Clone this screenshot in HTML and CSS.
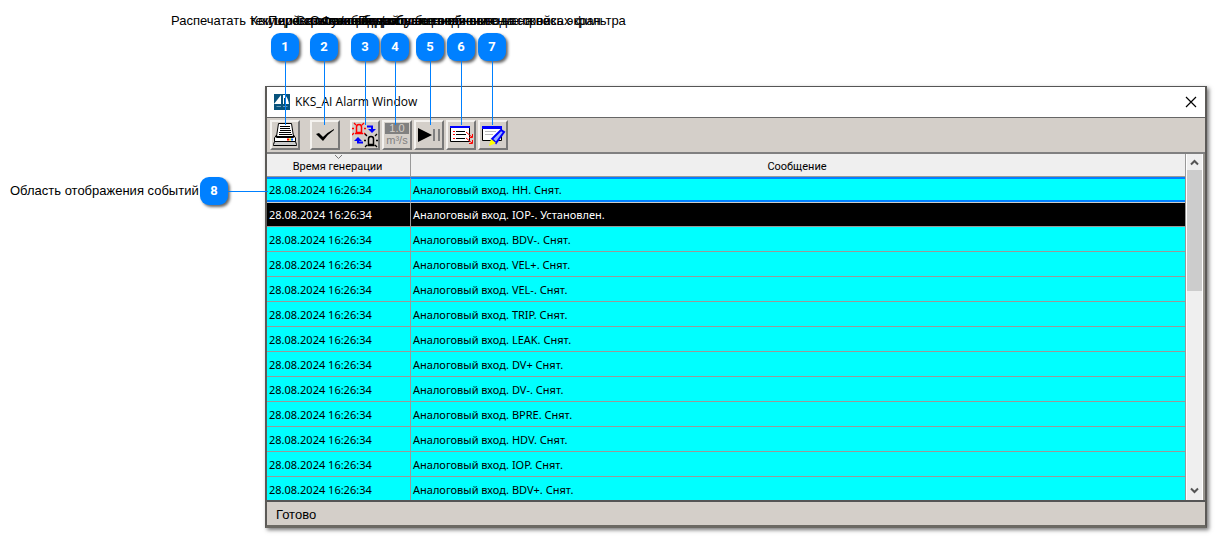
FILE: index.html
```html
<!DOCTYPE html>
<html lang="ru">
<head>
<meta charset="utf-8">
<title>KKS_AI Alarm Window</title>
<link rel="stylesheet" href="styles.css">
</head>
<body>
<main class="figure">
  <section class="window">
    <header class="titlebar">
      <svg class="logo" width="16" height="16" viewBox="0 0 16 16" aria-hidden="true"><rect width="16" height="16" fill="#07527c"/><path d="M0 10 7 1v9zM9 1h2q3 3 4 9h-4V4h-1v6H9z" fill="#fff"/><path d="M2 12h5v1H3zM9 12h5l-1 1H9z" fill="#6c9db8"/></svg>
      <h1 class="title">KKS_AI Alarm Window</h1>
      <button class="close" aria-label="Закрыть"><svg width="12" height="12" viewBox="0 0 12 12"><path d="m1 1 10 10M11 1 1 11" stroke="#000" stroke-width="1.200"/></svg></button>
    </header>
    <div class="toolbar">
      <button class="tool tool-spaced" aria-label="Печать"><svg width="26" height="26" viewBox="0 0 26 26"><path d="M6.500 1.500h13l2 13h-17z" fill="#fff" stroke="#000"/><path d="M8 4.500h10M8 6.500h10M8 8.500h11M7 10.500h12M7 12.500h13" stroke="#000"/><path d="M4.500 13 2.500 16v3.500h21V16l-2-3v2.500h-17z" fill="#fff" stroke="#000"/><path d="M2.500 19.500h21l1 3v1h-23v-1z" fill="#ccc" stroke="#000"/><path d="M15 17.500h2" stroke="#f00" stroke-width="2"/><path d="M17 17.500h2" stroke="#fd0" stroke-width="2"/><path d="M19 17.500h2" stroke="#06f" stroke-width="2"/></svg></button>
      <button class="tool tool-spaced" aria-label="Квитировать"><svg width="26" height="26" viewBox="0 0 26 26"><path d="m4 12 3-1 4 4q5-5 11-8v1q-6 4-11 11z" fill="#000"/></svg></button>
      <button class="tool" aria-label="Переключить"><svg width="26" height="26" viewBox="0 0 26 26" fill="none"><path d="M4.500 10.500V5q0-2.500 2.500-2.500T9.500 5v5.500z" stroke="#f00" stroke-width="1.500"/><path d="M3 11.500h8M2 1l2 2M12 1l-2 2M0 6.500h2M12 6.500h2M0 13l2-2M12 11l2 2" stroke="#f00" stroke-width="1.300"/><path d="M16.500 22.500V17q0-2.500 2.500-2.500t2.500 2.500v5.500z" stroke="#000" stroke-width="1.500"/><path d="M15.500 23.500h7M13 12l2 2M25 12l-2 2M12 18.500h2M24 18.500h2M13 25l2-2M25 25l-2-2" stroke="#000" stroke-width="1.300"/><path d="M15 4.500h5V8M11 20.500H6V18" stroke="#00f" stroke-width="2"/><path d="m16 7 4 4 4-4zM2 19l4-4 4 4z" fill="#00f"/></svg></button>
      <button class="tool tool-units" aria-label="Единицы измерения"><span class="value">1.0</span><span class="unit">m³/s</span></button>
      <button class="tool" aria-label="Пауза"><svg width="26" height="26" viewBox="0 0 26 26"><path d="m2 6 14 7-14 7z" fill="#000"/><path d="M17 7h2v12h-2zM22 7h2v12h-2z" fill="#808080"/></svg></button>
      <button class="tool" aria-label="Список"><svg width="26" height="26" viewBox="0 0 26 26" fill="none"><path d="M2.500 5v14.500h19V5" fill="#fff" stroke="#000"/><path d="M2 4h20v2H2z" fill="#00f"/><path d="M5 9.500h2M5 12.500h2M5 16.500h2" stroke="#f00"/><path d="M8 9.500h9M8 12.500h10M8 16.500h9" stroke="#000"/><path d="m18 10 6 5M18 16l6 5M21 15.500h3.500V12M21 21.500h3.500V18" stroke="#f00"/></svg></button>
      <button class="tool" aria-label="Фильтр"><svg width="26" height="26" viewBox="0 0 26 26"><path d="M2.500 5v13.500h19V5" fill="#fff" stroke="#000"/><path d="M2 4h20v3H2z" fill="#00f"/><path d="M5 9.500h11M5 12.500h8" stroke="#bbb"/><path d="m12 17 9-9 3 2-8 11z" fill="#9db0ff" stroke="#00f" stroke-width="2"/><path d="m11 17 5 4-7 3z" fill="#ff0"/></svg></button>
    </div>
    <div class="content">
      <div class="list">
        <table class="events">
          <colgroup><col class="col-time"><col></colgroup>
          <thead><tr><th><svg class="sort" width="9" height="5" viewBox="0 0 9 5" aria-hidden="true"><path d="M1 0 4.500 3.500 8 0" fill="none" stroke="#777"/></svg>Время генерации</th><th>Сообщение</th></tr></thead>
          <tbody>
            <tr class="current"><td>28.08.2024 16:26:34</td><td>Аналоговый вход. HH. Снят.</td></tr>
            <tr class="selected"><td>28.08.2024 16:26:34</td><td>Аналоговый вход. IOP-. Установлен.</td></tr>
            <tr><td>28.08.2024 16:26:34</td><td>Аналоговый вход. BDV-. Снят.</td></tr>
            <tr><td>28.08.2024 16:26:34</td><td>Аналоговый вход. VEL+. Снят.</td></tr>
            <tr><td>28.08.2024 16:26:34</td><td>Аналоговый вход. VEL-. Снят.</td></tr>
            <tr><td>28.08.2024 16:26:34</td><td>Аналоговый вход. TRIP. Снят.</td></tr>
            <tr><td>28.08.2024 16:26:34</td><td>Аналоговый вход. LEAK. Снят.</td></tr>
            <tr><td>28.08.2024 16:26:34</td><td>Аналоговый вход. DV+ Снят.</td></tr>
            <tr><td>28.08.2024 16:26:34</td><td>Аналоговый вход. DV-. Снят.</td></tr>
            <tr><td>28.08.2024 16:26:34</td><td>Аналоговый вход. BPRE. Снят.</td></tr>
            <tr><td>28.08.2024 16:26:34</td><td>Аналоговый вход. HDV. Снят.</td></tr>
            <tr><td>28.08.2024 16:26:34</td><td>Аналоговый вход. IOP. Снят.</td></tr>
            <tr><td>28.08.2024 16:26:34</td><td>Аналоговый вход. BDV+. Снят.</td></tr>
          </tbody>
        </table>
      </div>
      <div class="scrollbar">
        <button class="arrow" aria-label="Вверх"><svg width="9" height="7" viewBox="0 0 9 7"><path d="m1 5.500 3.500-3.500L8 5.500" fill="none" stroke="#555" stroke-width="2"/></svg></button>
        <div class="thumb"></div>
        <button class="arrow arrow-down" aria-label="Вниз"><svg width="9" height="7" viewBox="0 0 9 7"><path d="m1 1.500 3.500 3.500L8 1.500" fill="none" stroke="#555" stroke-width="2"/></svg></button>
      </div>
    </div>
    <footer class="status">Готово</footer>
  </section>

  <div class="callout c1"><span class="label">Распечатать текущий список событий</span><span class="pill">1</span></div>
  <div class="callout c2"><span class="label">Квитировать сообщения</span><span class="pill">2</span></div>
  <div class="callout c3"><span class="label">Переключение вида сообщений</span><span class="pill">3</span></div>
  <div class="callout c4"><span class="label">Скрыть/отобразить все значения</span><span class="pill">4</span></div>
  <div class="callout c5"><span class="label">Остановить/запустить обновление окна</span><span class="pill">5</span></div>
  <div class="callout c6"><span class="label">Функция отображения и вывода на весь экран</span><span class="pill">6</span></div>
  <div class="callout c7"><span class="label">Подробные сведения о настройках фильтра</span><span class="pill">7</span></div>
  <div class="callout-side"><span class="label">Область отображения событий</span><span class="pill">8</span></div>
</main>
</body>
</html>
```
FILE: styles.css
```css
* { box-sizing: border-box; }
body { margin: 0; background: #fff; color: #000; font-family: "Liberation Sans", Arial, sans-serif; }
button { padding: 0; border: 0; background: none; font: inherit; }
svg { display: block; }

.figure { position: relative; padding: 86px 9px 9px 265px; overflow: hidden; }
.window {
  display: flex;
  flex-direction: column;
  border: 1px solid #555;
  border-width: 1px 2px 3px;
  border-color: #555 #5c5a57 #6b6963 #5c5a57;
  background: #fff;
  box-shadow: 2px 2px 4px #0008;
}
.titlebar { display: flex; align-items: center; gap: 5px; height: 30px; padding: 0 8px 0 7px; }
.title { flex: 1; margin: 0; font: 400 12px/16px "Open Sans", "Noto Sans", sans-serif; }
.close { display: grid; place-items: center; width: 12px; height: 12px; }

.toolbar {
  display: flex;
  align-items: flex-start;
  gap: 2px;
  height: 37px;
  padding: 2px 3px;
  border-top: 1px solid #666;
  border-bottom: 2px solid #808080;
  background: #d4cfc9;
}
.tool {
  display: grid;
  place-items: center;
  width: 30px;
  height: 30px;
  border: 2px solid #777;
  border-color: #f4f2ef #777 #777 #f4f2ef;
}
.tool-spaced { margin-right: 8px; }
.tool-units { align-content: center; color: #808080; font: 11px/13px "Liberation Sans", Arial, sans-serif; }
.value { width: 24px; height: 11px; background: #808080; color: #d4cfc9; line-height: 11px; }

.content { display: flex; height: 346px; border-right: 2px solid #999690; }
.list { flex: 1; overflow: hidden; border-right: 1px solid #999; }
.events {
  width: 100%;
  border-collapse: separate;
  border-spacing: 0;
  table-layout: fixed;
  font: 11px/15px "Noto Sans", "Open Sans", sans-serif;
}
.col-time { width: 144px; }
th {
  position: relative;
  height: 23px;
  padding: 2px 2px 0 0;
  border-right: 1px solid #999;
  border-bottom: 1px solid #999;
  background: #efefef;
  font: 400 11px/15px Roboto, sans-serif;
}
th:last-child, td:last-child { border-right: 0; }
.sort { position: absolute; top: 1px; left: 67px; }
td {
  height: 25px;
  padding: 0 2px;
  border-right: 1px solid #999;
  border-bottom: 1px solid #999;
  background: #0ff;
  white-space: nowrap;
}
.current td { border-top: 2px solid #0080ff; border-bottom: 2px solid #0080ff; }
.selected td { border-top: 1px solid #ccc; background: #000; color: #fff; }

.scrollbar {
  display: flex;
  flex-direction: column;
  width: 17px;
  border: solid #fff;
  border-width: 0 1px;
  background: #efefef;
}
.arrow { display: grid; place-items: center; height: 16px; }
.arrow-down { margin-top: auto; height: 20px; }
.thumb { height: 121px; background: #ccc; }
.status {
  height: 25px;
  padding: 0 9px;
  border-top: 2px solid #555;
  background: #d4cfc9;
  font-size: 13px;
  line-height: 25px;
}

.label { font-size: 13px; line-height: 16px; white-space: nowrap; }
.pill {
  flex: none;
  width: 28px;
  height: 28px;
  border-radius: 9px;
  background: #0080ff;
  box-shadow: 2px 2px 3px #0009;
  color: #fff;
  font: 700 13px/28px Roboto, sans-serif;
  text-align: center;
}
.callout {
  position: absolute;
  top: 13px;
  display: flex;
  flex-direction: column;
  align-items: center;
  gap: 4px;
  width: 28px;
}
.callout::after { content: ""; width: 1px; height: 64px; margin-top: -4px; background: #0080ff; }
.c1 { left: 271px; }
.c2 { left: 310px; }
.c3 { left: 351px; }
.c4 { left: 381px; }
.c5 { left: 416px; }
.c6 { left: 447px; }
.c7 { left: 478px; }
.callout-side { position: absolute; top: 177px; left: 10px; display: flex; align-items: center; width: 258px; }
.callout-side .pill { margin-left: auto; }
.callout-side::after { content: ""; width: 40px; height: 1px; background: #0080ff; }
```
